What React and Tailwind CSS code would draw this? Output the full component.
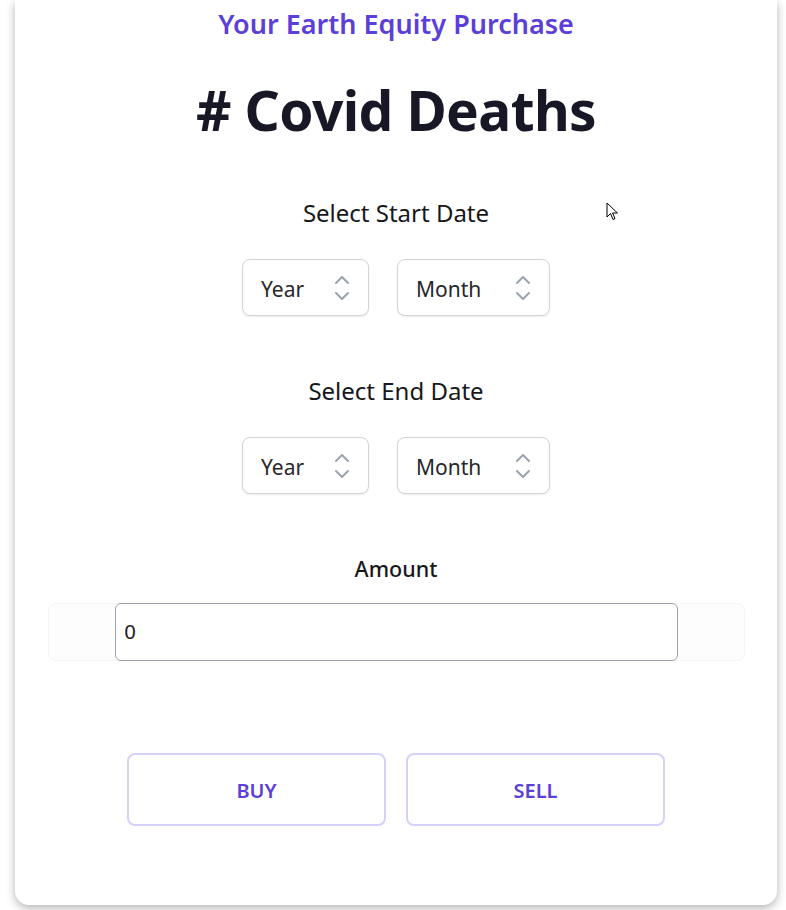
import React from "react";

const font = { fontFamily: '"Noto Sans", "Open Sans", sans-serif' };

const Chevrons = () => (
  <svg width="18" height="28" viewBox="0 0 18 28" fill="none" stroke="#9ca3af" strokeWidth="2" strokeLinecap="round" strokeLinejoin="round">
    <path d="M3 9 L9 3 L15 9" />
    <path d="M3 19 L9 25 L15 19" />
  </svg>
);

const Select = ({ label, width }) => (
  <div className={`h-[57px] ${width} flex items-center justify-between pl-[18px] pr-[17px] bg-white border border-[#d4d4d8] rounded-[8px] shadow-[0_1px_2px_rgba(0,0,0,0.08)]`}>
    <span className="text-[21px] leading-[28px] pt-[3px] text-[#27272a]">{label}</span>
    <Chevrons />
  </div>
);

const DatePicker = ({ title }) => (
  <div className="flex flex-col items-center">
    <div className="text-[24px] leading-[30px] text-[#18181b]">{title}</div>
    <div className="mt-[31px] flex gap-[28px]">
      <Select label="Year" width="w-[127px]" />
      <Select label="Month" width="w-[153px]" />
    </div>
  </div>
);

export default function App() {
  return (
    <div className="relative min-h-[910px] bg-white overflow-hidden" style={font}>
      <div className="ml-[15px] w-[762px] h-[905px] bg-white rounded-b-[14px] shadow-[0_3px_10px_rgba(0,0,0,0.3)] flex flex-col items-center pt-[6px]">
        <div className="text-[27px] leading-[36px] font-semibold text-[#5b3fd8]">Your Earth Equity Purchase</div>
        <h1 className="mt-[36px] text-[55px] leading-[64px] font-bold text-[#171726] tracking-[-0.6px]"># Covid Deaths</h1>
        <div className="mt-[56px]">
          <DatePicker title="Select Start Date" />
        </div>
        <div className="mt-[60px]">
          <DatePicker title="Select End Date" />
        </div>
        <div className="mt-[61px] text-[21.5px] leading-[28px] font-medium text-[#18181b]">Amount</div>
        <div className="mt-[20px] w-[697px] h-[58px] rounded-[8px] border border-[#f4f4f5] bg-[#fdfdfd] flex justify-center">
          <input
            type="text"
            defaultValue="0"
            className="w-[563px] h-[58px] -mt-px border border-[#9ca3af] rounded-[6px] bg-white px-[9px] text-[20px] text-[#18181b] outline-none"
            style={{ fontFamily: '"Liberation Sans", Arial, sans-serif' }}
          />
        </div>
        <div className="mt-[92px] flex gap-[20px]">
          <button className="w-[259px] h-[73px] pt-[3px] rounded-[8px] border-2 border-[#d4d2fb] bg-white text-[20px] font-semibold text-[#5b3fd8]">BUY</button>
          <button className="w-[259px] h-[73px] pt-[3px] rounded-[8px] border-2 border-[#d4d2fb] bg-white text-[20px] font-semibold text-[#5b3fd8]">SELL</button>
        </div>
      </div>
      <svg className="absolute left-[606px] top-[202px]" width="13" height="20" viewBox="0 0 13 20">
        <path d="M1 1 L1 15 L4.5 11.5 L7 17.5 L9 16.6 L6.6 11 L11.5 11 Z" fill="white" stroke="black" strokeWidth="1" strokeLinejoin="round" />
      </svg>
    </div>
  );
}
